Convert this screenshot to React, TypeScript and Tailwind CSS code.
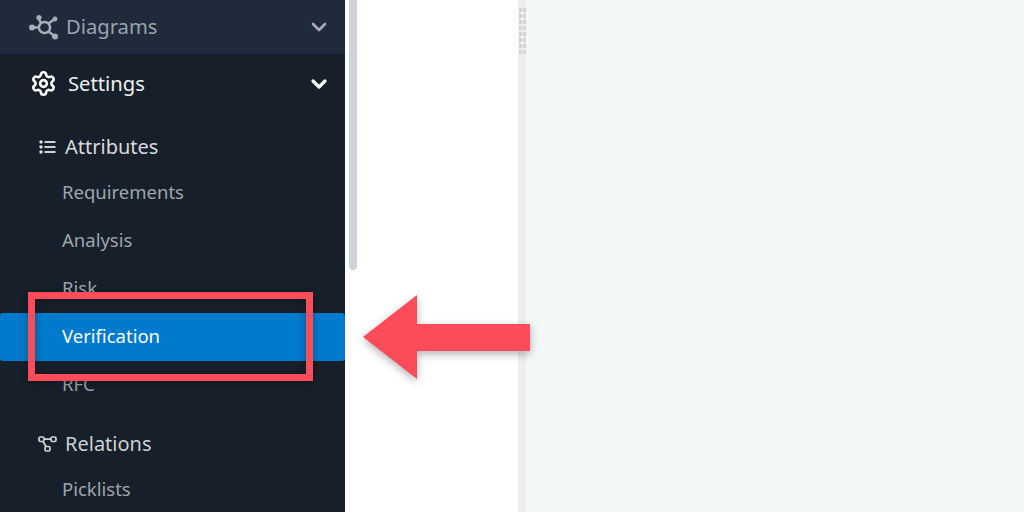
import { ChevronDown, Settings } from 'lucide-react';

const DiagramIcon = () => (
    <svg width="30" height="26" viewBox="0 0 30 26" fill="none" stroke="currentColor" strokeWidth="2.5" className="text-[#a7aeb8]">
        <circle cx="15.5" cy="13.5" r="5.6" />
        <path d="M12 9 L9.5 4.5 M10 13.5 H4 M19.5 9.5 L25 5.5 M19.5 17.5 L25.5 22" />
        <circle cx="10" cy="3.5" r="2.6" fill="currentColor" stroke="none" />
        <circle cx="3" cy="13.5" r="3" fill="currentColor" stroke="none" />
        <circle cx="26" cy="5" r="2.4" fill="currentColor" stroke="none" />
        <circle cx="26" cy="22.5" r="3" fill="currentColor" stroke="none" />
    </svg>
);

const AttributesIcon = () => (
    <svg width="17" height="14" viewBox="0 0 17 14" fill="currentColor" className="text-[#e4e6e9]">
        <rect x="0.5" y="0.5" width="3" height="3" rx="0.8" />
        <rect x="0.5" y="5.5" width="3" height="3" rx="0.8" />
        <rect x="0.5" y="10.5" width="3" height="3" rx="0.8" />
        <rect x="5.5" y="1.1" width="11" height="1.8" />
        <rect x="5.5" y="6.1" width="11" height="1.8" />
        <rect x="5.5" y="11.1" width="11" height="1.8" />
    </svg>
);

const RelationsIcon = () => (
    <svg width="19" height="16" viewBox="0 0 19 16" fill="none" stroke="currentColor" strokeWidth="1.7" className="text-[#d3d6da]">
        <rect x="1" y="1" width="5" height="4.5" rx="1.4" />
        <rect x="13" y="1" width="5" height="4.5" rx="1.4" />
        <rect x="7" y="10.5" width="5" height="4.5" rx="1.4" />
        <path d="M6 3.2 H13 M5 5.5 L8 10.5" />
    </svg>
);

const subItems = ['Requirements', 'Analysis', 'Risk', 'Verification', 'RFC'];

export default function App() {
    return (
        <div className="relative flex h-[512px] w-[1024px] overflow-hidden bg-white font-['Noto_Sans',sans-serif]">
            <aside className="w-[345px] shrink-0 bg-[#171f2a]">
                <div className="flex h-[54px] items-center justify-between bg-[#1f2b3b] pl-[29px] pr-[14px]">
                    <div className="flex items-center gap-[7px]">
                        <DiagramIcon />
                        <span className="-translate-y-px text-[20.2px] text-[#9aa3ae]">Diagrams</span>
                    </div>
                    <ChevronDown size={24} strokeWidth={2.7} className="text-[#a7aeb8]" />
                </div>
                <div className="flex h-[60px] items-center justify-between pl-[30px] pr-[14px]">
                    <div className="flex items-center gap-[11px]">
                        <Settings size={27} strokeWidth={2.3} className="text-white" />
                        <span className="-translate-y-px text-[20.2px] text-[#eef0f2]">Settings</span>
                    </div>
                    <ChevronDown size={24} strokeWidth={3.2} className="text-white" />
                </div>
                <div className="mt-[15px] flex h-[36px] items-center gap-[9px] pl-[39px]">
                    <AttributesIcon />
                    <span className="text-[20px] text-[#d7dade]">Attributes</span>
                </div>
                <ul className="mt-[4px]">
                    {subItems.map((item) => (
                        <li
                            key={item}
                            className={
                                item === 'Verification'
                                    ? 'flex h-[48px] items-center rounded-[3px] bg-[#007acc] pb-[2px] pl-[62px] text-[18.5px] text-white'
                                    : 'flex h-[48px] items-center pb-[2px] pl-[62px] text-[18.5px] text-[#9ea5af]'
                            }
                        >
                            {item}
                        </li>
                    ))}
                </ul>
                <div className="mt-[17px] flex h-[36px] items-center gap-[8px] pl-[38px]">
                    <RelationsIcon />
                    <span className="text-[20px] text-[#ccd0d5]">Relations</span>
                </div>
                <div className="mt-[3px] flex h-[48px] items-center pl-[62px] text-[18.5px] text-[#9ea5af]">Picklists</div>
            </aside>

            <div className="w-[173px] shrink-0 pl-[4px]">
                <div className="h-[270px] w-[8px] rounded-b-[4px] bg-[#cdd3d6]" />
            </div>

            <div className="flex w-[8px] shrink-0 justify-center bg-[#eeeeee]">
                <div className="grid h-[52px] w-[6px] grid-cols-2 content-start gap-[2px] pt-[8px]">
                    {Array.from({ length: 16 }).map((_, i) => (
                        <span key={i} className="h-[4px] w-[2.5px] bg-[#d3d3d3]" />
                    ))}
                </div>
            </div>

            <main className="flex-1 bg-[#f4f7f8]" />

            <div className="absolute left-[28px] top-[292px] h-[89px] w-[285px] border-[7px] border-[#fc4c59] shadow-[0_2px_8px_rgba(0,0,0,0.3),inset_0_2px_8px_rgba(0,0,0,0.3)]" />

            <svg className="absolute left-[355px] top-[288px] drop-shadow-[0_3px_4px_rgba(0,0,0,0.3)]" width="185" height="100" viewBox="0 0 185 100">
                <polygon points="8,49 62,7 62,36 175,36 175,63 62,63 62,91" fill="#fc4c59" />
            </svg>
        </div>
    );
}
